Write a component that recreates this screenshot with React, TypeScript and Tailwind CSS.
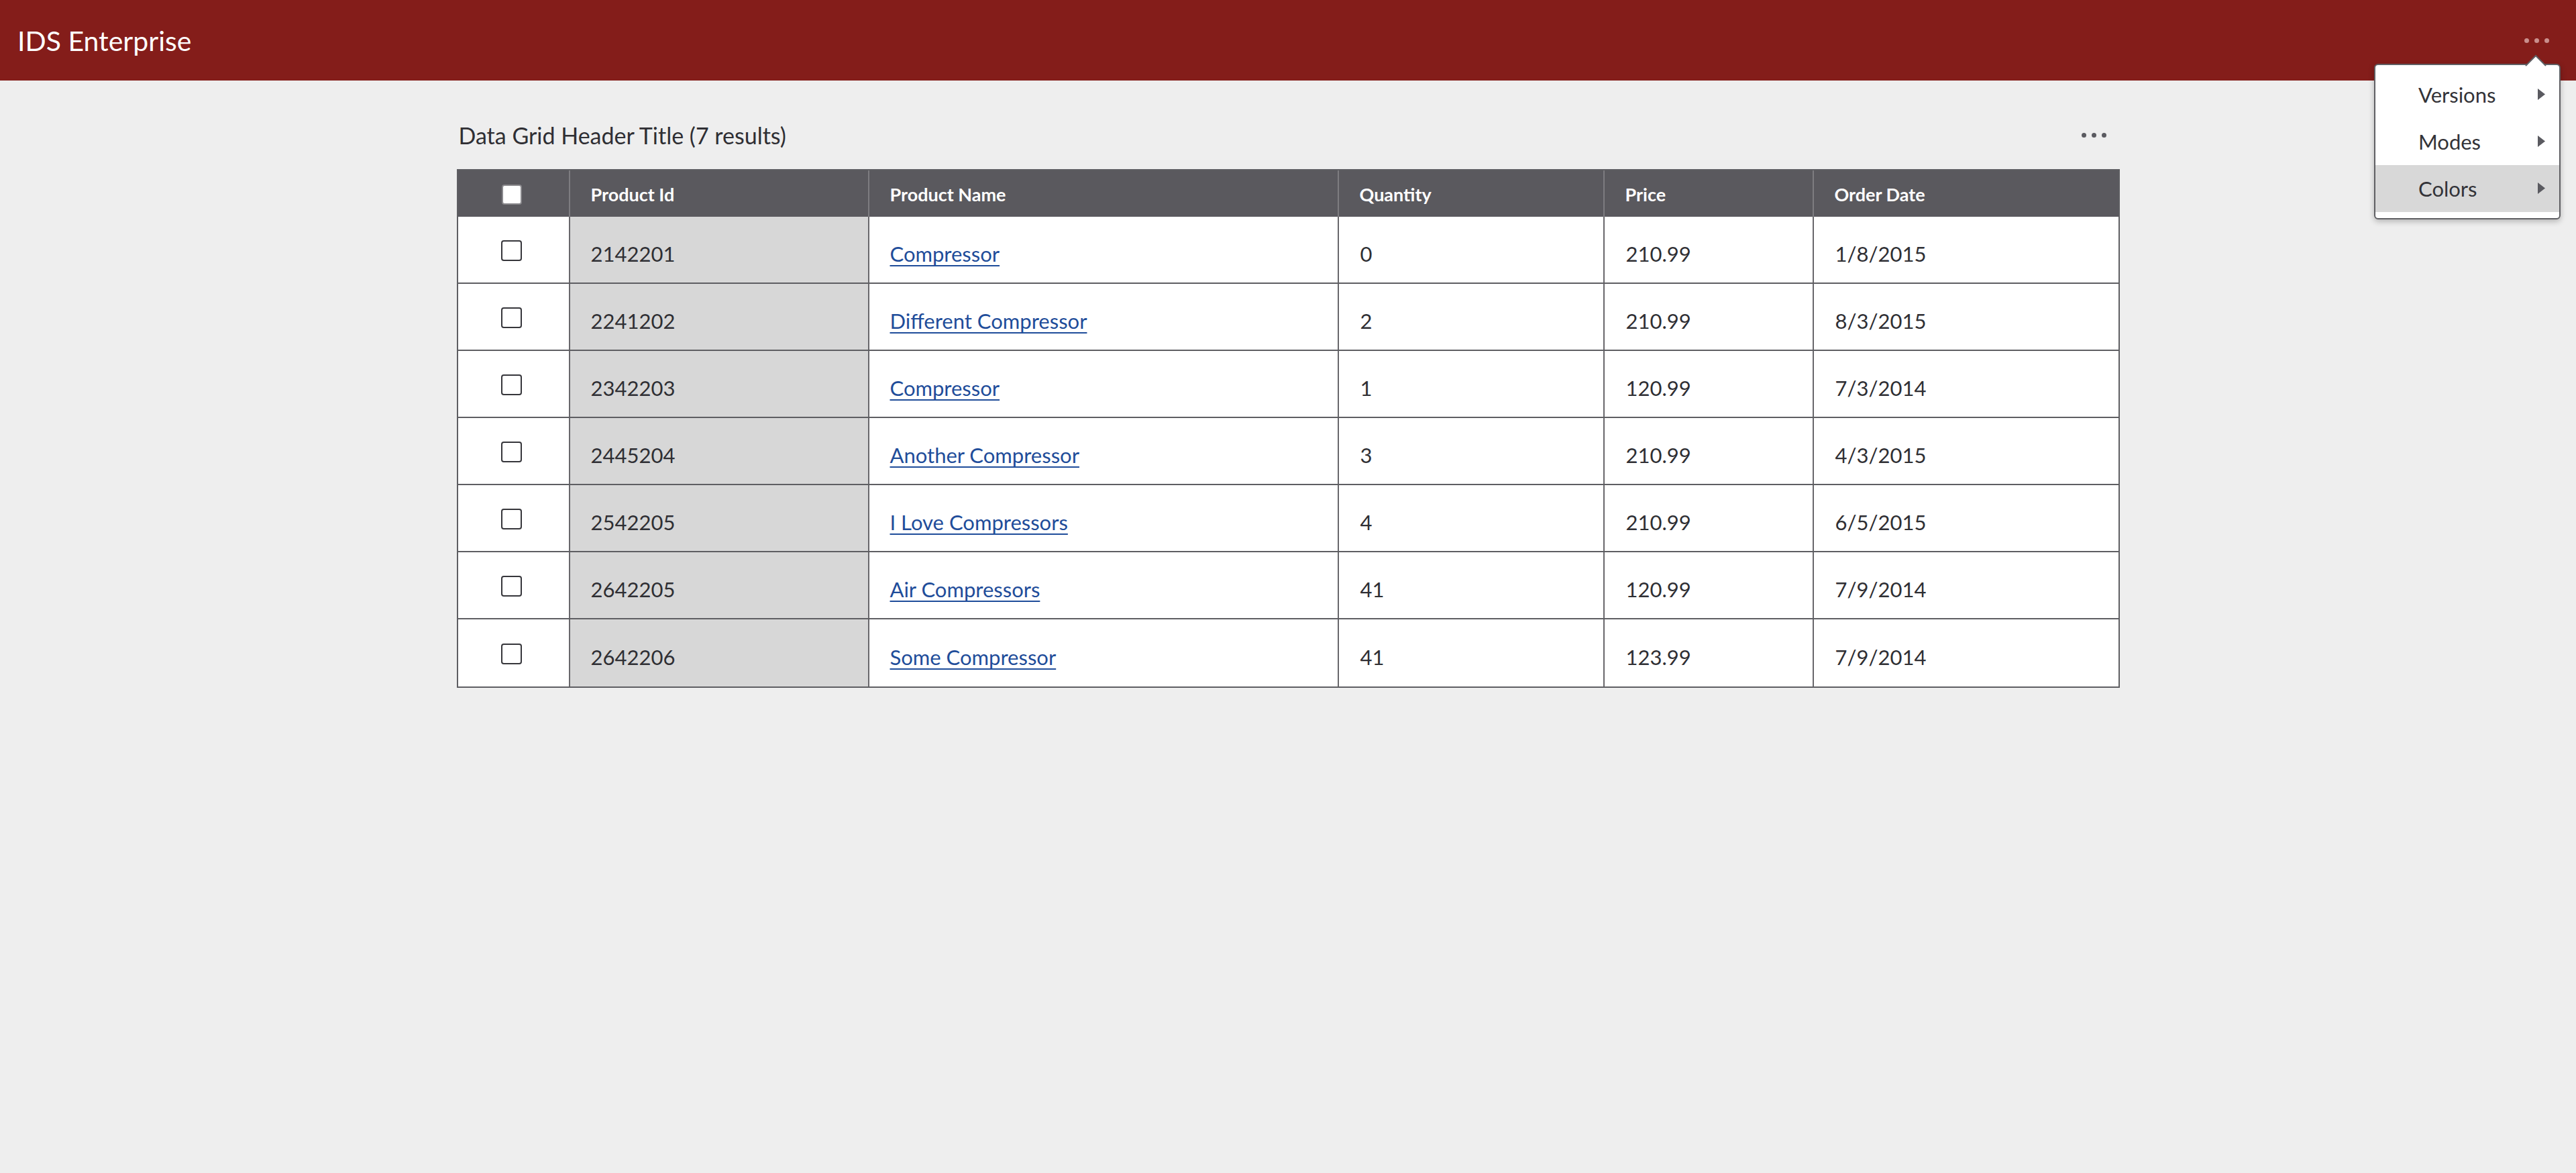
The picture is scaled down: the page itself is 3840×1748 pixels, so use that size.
import React from "react";

const rows = [
  ["2142201", "Compressor", "0", "210.99", "1/8/2015"],
  ["2241202", "Different Compressor", "2", "210.99", "8/3/2015"],
  ["2342203", "Compressor", "1", "120.99", "7/3/2014"],
  ["2445204", "Another Compressor", "3", "210.99", "4/3/2015"],
  ["2542205", "I Love Compressors", "4", "210.99", "6/5/2015"],
  ["2642205", "Air Compressors", "41", "120.99", "7/9/2014"],
  ["2642206", "Some Compressor", "41", "123.99", "7/9/2014"],
];

const cols = "grid grid-cols-[165px_446px_700px_396px_312px_456px]";

function Dots({ color }: { color: string }) {
  return (
    <div className="flex items-center gap-[8px]">
      <span className={`block w-[7px] h-[7px] rounded-full ${color}`} />
      <span className={`block w-[7px] h-[7px] rounded-full ${color}`} />
      <span className={`block w-[7px] h-[7px] rounded-full ${color}`} />
    </div>
  );
}

function SubArrow() {
  return (
    <svg width="12" height="18" viewBox="0 0 12 18" className="block">
      <polygon points="0,0 11,8.5 0,17" fill="#5a5a60" />
    </svg>
  );
}

export default function App() {
  return (
    <div
      className="relative min-h-screen w-full bg-[#eeeeee] text-[#2f2f34]"
      style={{ fontFamily: "Lato, 'Noto Sans', sans-serif" }}
    >
      {/* App header */}
      <header className="h-[120px] bg-[#841d1a] flex items-center justify-between pl-[26px] pr-[40px]">
        <h1 className="text-white text-[41px] font-normal leading-none">IDS Enterprise</h1>
        <Dots color="bg-[#c98f8d]" />
      </header>

      {/* Popup menu */}
      <div className="absolute right-[23px] top-[95px] w-[278px] bg-white border-2 border-[#5f5f63] rounded-[6px] shadow-[0_3px_8px_rgba(0,0,0,0.25)] pt-[9px] pb-[9px]">
        <svg
          width="32"
          height="18"
          viewBox="0 0 32 18"
          className="absolute top-[-16px] right-[19px]"
        >
          <polygon points="1,17 16,2 31,17" fill="#ffffff" />
          <polyline points="1,17 16,2 31,17" fill="none" stroke="#5f5f63" strokeWidth="2" />
        </svg>
        <ul className="text-[31px] text-[#333338]">
          <li className="h-[70px] flex items-center justify-between pl-[64px] pr-[20px]">
            <span>Versions</span>
            <SubArrow />
          </li>
          <li className="h-[70px] flex items-center justify-between pl-[64px] pr-[20px]">
            <span>Modes</span>
            <SubArrow />
          </li>
          <li className="h-[70px] flex items-center justify-between pl-[64px] pr-[20px] bg-[#d8d8d8]">
            <span>Colors</span>
            <SubArrow />
          </li>
        </ul>
      </div>

      {/* Main */}
      <main className="w-[2479px] mx-auto pt-[49px]">
        <div className="h-[64px] flex items-center justify-between pl-[3px] pr-[20px] mb-[19px]">
          <h2 className="text-[34px] font-normal text-[#2f2f34]">Data Grid Header Title (7 results)</h2>
          <Dots color="bg-[#5a5a60]" />
        </div>

        <div className="border-2 border-[#5e5e62] bg-white">
          {/* header */}
          <div className={`${cols} h-[69px] bg-[#5a595e] text-white text-[27px] font-bold`}>
            <div className="flex items-center justify-center pr-[5px] pt-[2px]">
              <span className="block w-[30px] h-[30px] bg-white border-2 border-[#8a898d] rounded-[4px]" />
            </div>
            {["Product Id", "Product Name", "Quantity", "Price", "Order Date"].map((h) => (
              <div key={h} className="border-l-2 border-[#7d7c80] flex items-center pl-[31px] pt-[4px]">
                {h}
              </div>
            ))}
          </div>
          {/* body */}
          {rows.map((r, i) => (
            <div
              key={i}
              className={`${cols} h-[100px] text-[31px] ${i < rows.length - 1 ? "border-b-2 border-[#5e5e62]" : ""}`}
            >
              <div className="flex items-center justify-center pt-[2px] pr-[5px]">
                <span className="block w-[31px] h-[31px] bg-white border-2 border-[#36363b] rounded-[4px]" />
              </div>
              <div className="border-l-2 border-[#68676b] bg-[#d7d7d7] flex items-center pl-[31px] pt-[13px]">
                {r[0]}
              </div>
              <div className="border-l-2 border-[#68676b] flex items-center pl-[31px] pt-[13px]">
                <a href="#" className="text-[#1f4d9a] underline underline-offset-[5px] decoration-2">
                  {r[1]}
                </a>
              </div>
              <div className="border-l-2 border-[#68676b] flex items-center pl-[32px] pt-[13px]">{r[2]}</div>
              <div className="border-l-2 border-[#68676b] flex items-center pl-[32px] pt-[13px]">{r[3]}</div>
              <div className="border-l-2 border-[#68676b] flex items-center pl-[32px] pt-[13px]">{r[4]}</div>
            </div>
          ))}
        </div>
      </main>
    </div>
  );
}
